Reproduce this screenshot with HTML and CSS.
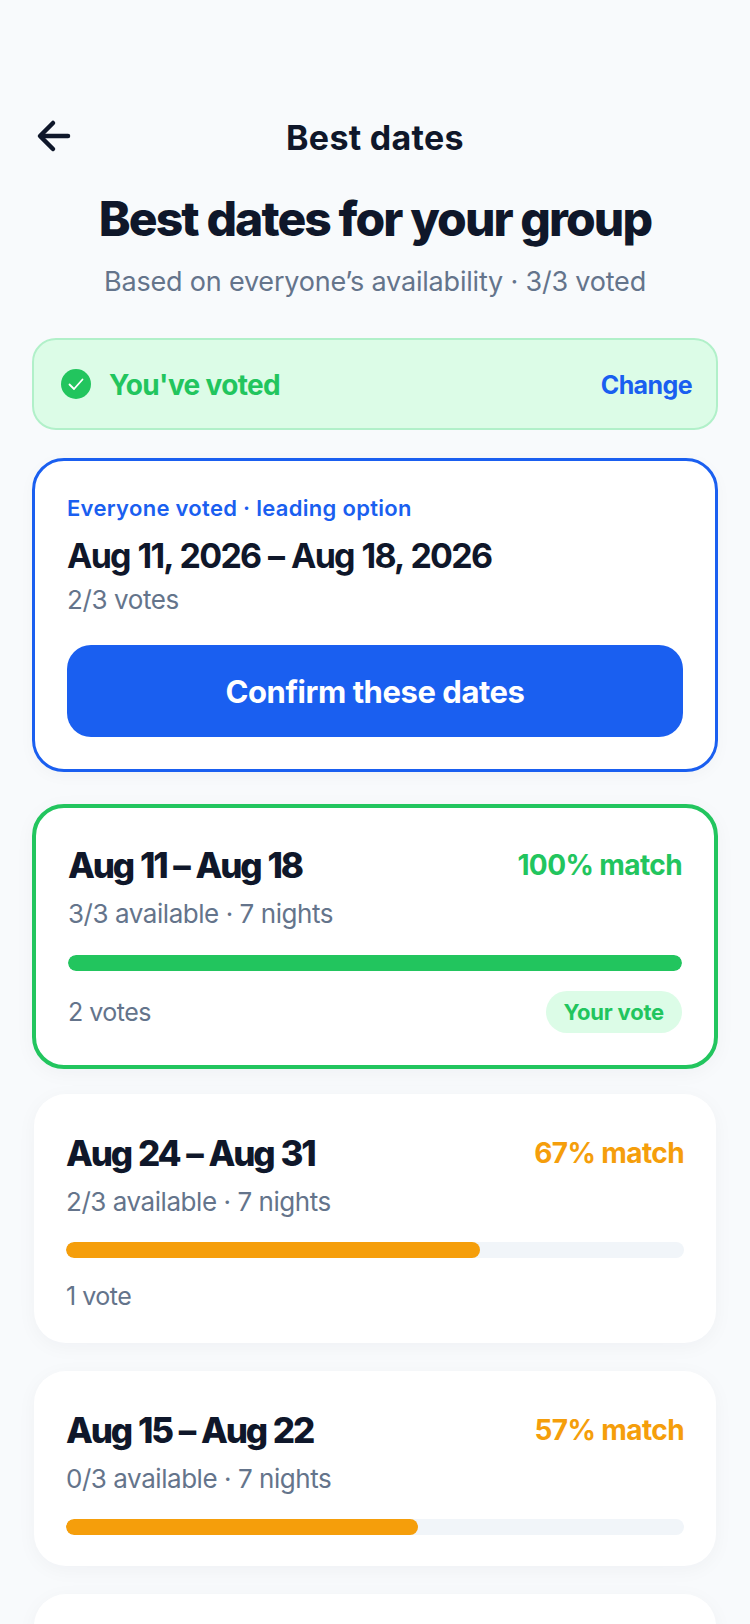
FILE: index.html
```html
<!DOCTYPE html>
<html lang="en">

<head>
    <meta charset="UTF-8">
    <meta name="viewport" content="width=device-width, initial-scale=1.0">
    <title>Best dates</title>
    <link rel="stylesheet" href="styles.css">
</head>

<body>
    <div class="screen">
        <header class="top-bar">
            <a class="back-btn" aria-label="Back">
                <svg width="36" height="36" viewBox="0 0 36 36" fill="none" stroke="#0f172a" stroke-width="4.500" stroke-linecap="round" stroke-linejoin="round">
                    <path d="M32 18H5" />
                    <path d="M17 5L4 18L17 31" />
                </svg>
            </a>
            <span class="top-title">Best dates</span>
        </header>

        <section class="intro">
            <h1 class="intro-title">Best dates for your group</h1>
            <p class="intro-sub">Based on everyone’s availability · 3/3 voted</p>
        </section>

        <div class="voted-banner">
            <span class="voted-check">
                <svg width="30" height="30" viewBox="0 0 30 30" fill="none">
                    <circle cx="15" cy="15" r="15" fill="#22c55e" />
                    <path d="M8.500 15.500L13 20L21.500 10.500" stroke="#fff" stroke-width="1.800" stroke-linecap="round" stroke-linejoin="round" />
                </svg>
            </span>
            <span class="voted-text">You've voted</span>
            <a class="voted-change">Change</a>
        </div>

        <section class="lead-card">
            <p class="lead-label">Everyone voted · leading option</p>
            <h2 class="lead-dates">Aug 11, 2026 – Aug 18, 2026</h2>
            <p class="lead-votes">2/3 votes</p>
            <button class="confirm-btn">Confirm these dates</button>
        </section>

        <section class="date-card date-card-selected">
            <div class="date-head">
                <h3 class="date-range">Aug 11 – Aug 18</h3>
                <span class="date-match match-green">100% match</span>
            </div>
            <p class="date-sub">3/3 available · 7 nights</p>
            <div class="bar"><div class="bar-fill fill-green" style="width: 100%"></div></div>
            <div class="date-foot">
                <span class="date-votes">2 votes</span>
                <span class="vote-pill">Your vote</span>
            </div>
        </section>

        <section class="date-card">
            <div class="date-head">
                <h3 class="date-range">Aug 24 – Aug 31</h3>
                <span class="date-match match-amber">67% match</span>
            </div>
            <p class="date-sub">2/3 available · 7 nights</p>
            <div class="bar"><div class="bar-fill fill-amber" style="width: 67%"></div></div>
            <div class="date-foot">
                <span class="date-votes">1 vote</span>
            </div>
        </section>

        <section class="date-card">
            <div class="date-head">
                <h3 class="date-range">Aug 15 – Aug 22</h3>
                <span class="date-match match-amber">57% match</span>
            </div>
            <p class="date-sub">0/3 available · 7 nights</p>
            <div class="bar"><div class="bar-fill fill-amber" style="width: 57%"></div></div>
        </section>

        <section class="date-card date-card-next"></section>
    </div>
</body>

</html>
```

FILE: styles.css
```css
* {
    box-sizing: border-box;
}

html,
body {
    margin: 0;
    height: 100%;
    overflow: hidden;
}

body {
    background: #f8fafc;
    color: #0f172a;
    font-family: Inter, "Open Sans", sans-serif;
}

h1,
h2,
h3,
p {
    margin: 0;
}

.screen {
    height: 1624px;
    overflow: hidden;
    padding: 112px 32px 0;
    display: flex;
    flex-direction: column;
}

.screen > * {
    flex-shrink: 0;
}

/* top bar */

.top-bar {
    position: relative;
    height: 50px;
    display: flex;
    align-items: center;
    justify-content: center;
}

.back-btn {
    position: absolute;
    left: 4px;
    top: 6px;
    height: 36px;
}

.top-title {
    font-size: 34px;
    font-weight: 700;
    letter-spacing: 0.3px;
}

/* intro */

.intro {
    margin-top: 28px;
    text-align: center;
}

.intro-title {
    font-size: 48px;
    line-height: 58px;
    font-weight: 800;
    letter-spacing: -1.9px;
}

.intro-sub {
    margin-top: 16px;
    font-size: 27px;
    line-height: 36px;
    color: #64748b;
    letter-spacing: -0.2px;
}

/* voted banner */

.voted-banner {
    margin-top: 38px;
    height: 92px;
    padding: 2px 24px 0 27px;
    display: flex;
    align-items: center;
    background: #dcfce7;
    border: 2px solid #b1f0c9;
    border-radius: 24px;
}

.voted-check {
    display: flex;
    margin: -2px 18px 0 0;
}

.voted-text {
    flex: 1;
    font-size: 28px;
    font-weight: 700;
    color: #22c55e;
    letter-spacing: -0.65px;
}

.voted-change {
    font-size: 25px;
    font-weight: 700;
    color: #1a5ff0;
    letter-spacing: -0.6px;
}

/* leading option */

.lead-card {
    margin-top: 28px;
    height: 314px;
    padding: 32px;
    background: #fff;
    border: 3px solid #1a5ff0;
    border-radius: 32px;
    box-shadow: 0 4px 16px rgba(15, 23, 42, 0.03);
}

.lead-label {
    font-size: 22px;
    line-height: 30px;
    font-weight: 600;
    color: #1a5ff0;
    letter-spacing: 0.3px;
}

.lead-dates {
    margin-top: 10px;
    font-size: 34px;
    line-height: 46px;
    font-weight: 700;
    letter-spacing: -1.75px;
    word-spacing: 1.400px;
}

.lead-votes {
    margin-top: 4px;
    font-size: 26px;
    line-height: 34px;
    color: #64748b;
    letter-spacing: -0.4px;
}

.confirm-btn {
    display: block;
    width: 100%;
    height: 92px;
    margin-top: 28px;
    border: 0;
    border-radius: 24px;
    background: #1a5ff0;
    color: #fff;
    font-family: inherit;
    font-size: 31px;
    font-weight: 700;
    letter-spacing: -0.45px;
}

/* date cards */

.date-card {
    margin: 28px 2px 0;
    padding: 35px 32px 31px;
    background: #fff;
    border-radius: 32px;
    box-shadow: 0 4px 20px rgba(15, 23, 42, 0.04);
}

.date-card-selected {
    margin: 32px 0 -3px;
    padding: 33px 32px 32px;
    border: 4px solid #22c55e;
}

.date-card-next {
    height: 120px;
}

.date-head {
    display: flex;
    justify-content: space-between;
    align-items: center;
}

.date-range {
    font-size: 35px;
    line-height: 48px;
    font-weight: 800;
    letter-spacing: -2.2px;
    word-spacing: 1.500px;
}

.date-match {
    font-size: 28px;
    font-weight: 700;
    letter-spacing: -0.6px;
}

.match-green {
    color: #22c55e;
}

.match-amber {
    color: #f59e0b;
}

.date-sub {
    margin-top: 8px;
    font-size: 26px;
    line-height: 34px;
    color: #64748b;
    letter-spacing: -0.45px;
}

.bar {
    height: 16px;
    margin-top: 23px;
    background: #f1f5f9;
    border-radius: 8px;
    overflow: hidden;
}

.date-card-selected .bar {
    margin-top: 24px;
}

.bar-fill {
    height: 100%;
    border-radius: 8px;
}

.fill-green {
    background: #22c55e;
}

.fill-amber {
    background: #f59e0b;
}

.date-foot {
    margin-top: 23px;
    height: 31px;
    display: flex;
    justify-content: space-between;
    align-items: center;
}

.date-card-selected .date-foot {
    margin-top: 20px;
    height: 42px;
}

.date-votes {
    font-size: 25px;
    line-height: 31px;
    color: #64748b;
    letter-spacing: -0.5px;
}

.vote-pill {
    height: 42px;
    padding: 0 18px;
    display: flex;
    align-items: center;
    background: #dcfce7;
    border-radius: 21px;
    font-size: 22px;
    font-weight: 700;
    color: #22c55e;
    letter-spacing: -0.2px;
}
```
